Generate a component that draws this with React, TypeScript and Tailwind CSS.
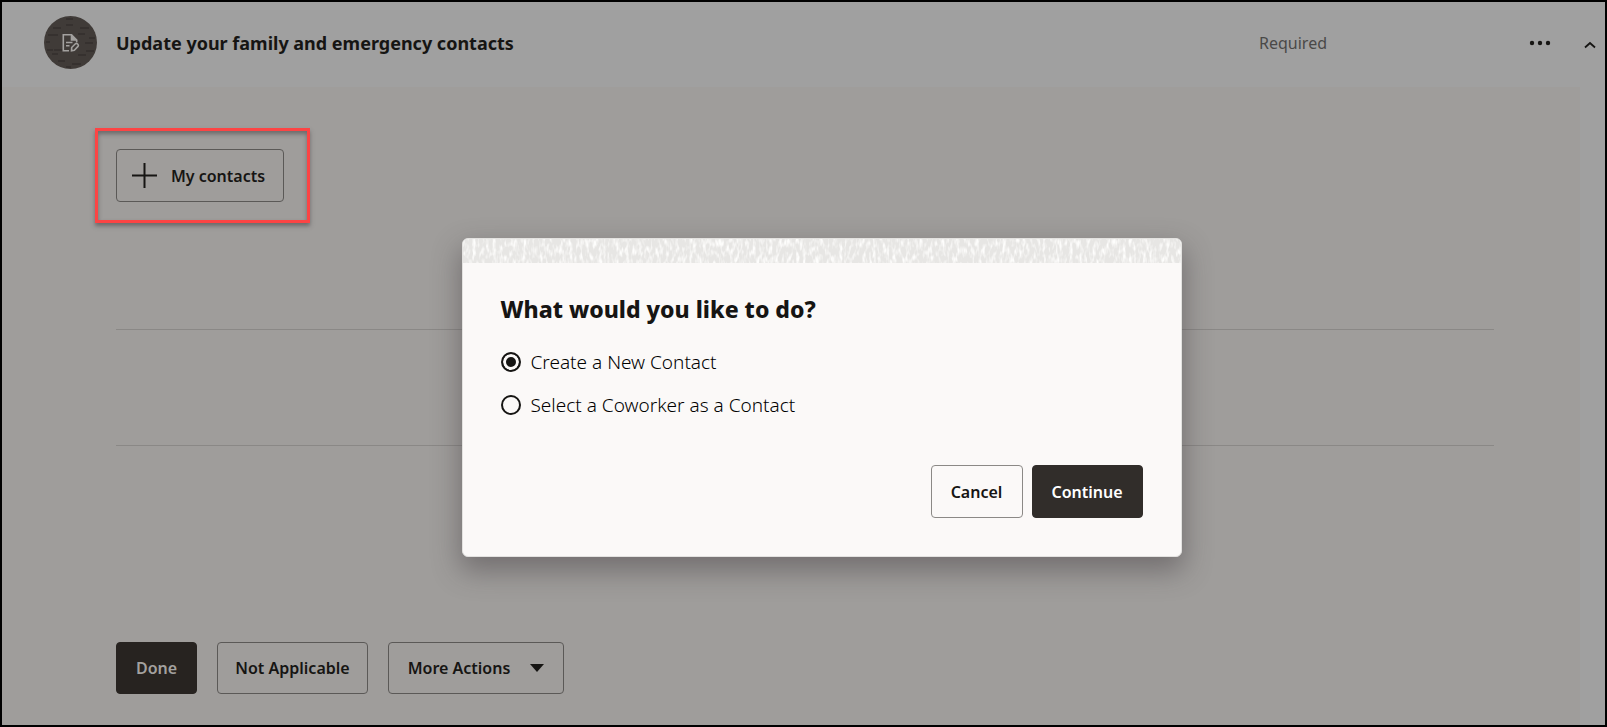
import { useState } from "react";
import type { ReactNode } from "react";
import clsx from "clsx";

const OPTIONS = [
  { value: "create", label: "Create a New Contact" },
  { value: "coworker", label: "Select a Coworker as a Contact" },
];

type ActionButtonProps = {
  children: ReactNode;
  className?: string;
};

const ActionButton = ({ children, className }: ActionButtonProps) => {
  return (
    <button
      type="button"
      className={clsx(
        "flex items-center justify-center rounded border text-base font-semibold whitespace-nowrap",
        className
      )}
    >
      {children}
    </button>
  );
};

const TaskIcon = () => {
  return (
    <svg viewBox="0 0 53 53" className="size-[53px]" aria-hidden="true">
      <circle cx="26.5" cy="26.5" r="26.5" fill="#403b38" />
      <path
        d="M22 3h7M9 12h8M22 9h7M36 12h9M4 19h10M34 18h7M45 22h6M2 26h4M10 34h9M41 27h8M3 34h6M42 35h8M8 38h6M34 39h8M14 45h7M28 48h9M22 51h5"
        stroke="#332f2c"
        strokeWidth="1.3"
      />
      <g fill="none" stroke="#a3a19f" strokeWidth="1.6">
        <path d="M25 34.700h-5.700V18.800h8.200l5.200 5.200v2.200" />
        <path d="M27.500 18.800V24h5.200" fill="#a3a19f" />
        <path d="M22 26.500h6.500M22 29.800h3.500" />
        <path d="M27.500 34.700l.2-3.200 3.700-3.700q1-.8 2 0l.6.700q.8 1 0 1.900l-3.700 3.900z" />
      </g>
    </svg>
  );
};

const TextureBand = () => {
  return (
    <svg className="block h-6 w-full" aria-hidden="true">
      <filter id="grain" x="0" y="0" width="100%" height="100%">
        <feTurbulence
          type="fractalNoise"
          baseFrequency="0.3 0.12"
          numOctaves="2"
          seed="4"
        />
        <feColorMatrix values="0 0 0 0 0.985  0 0 0 0 0.98  0 0 0 0 0.97  3 0 0 0 -1.3" />
      </filter>
      <rect width="100%" height="100%" fill="#e7e6e4" />
      <rect width="100%" height="100%" filter="url(#grain)" />
    </svg>
  );
};

const TaskHeader = () => {
  return (
    <header className="flex h-[85px] items-center pb-1 pl-[42px]">
      <TaskIcon />
      <h1 className="ml-[19px] text-lg font-bold">
        Update your family and emergency contacts
      </h1>
      <span className="mr-[202px] ml-auto text-base text-[#4a4948]">
        Required
      </span>
      <button type="button" aria-label="More options" className="mr-[33px]">
        <svg viewBox="0 0 22 6" className="h-1.5 w-[22px]" fill="#161513">
          <circle cx="3" cy="3" r="2.2" />
          <circle cx="11" cy="3" r="2.2" />
          <circle cx="19" cy="3" r="2.2" />
        </svg>
      </button>
      <button type="button" aria-label="Collapse" className="mt-1 mr-[9px]">
        <svg
          viewBox="0 0 12 8"
          className="h-2 w-3"
          fill="none"
          stroke="#161513"
          strokeWidth="1.8"
        >
          <path d="M1 6.500l5-4.500 5 4.500" />
        </svg>
      </button>
    </header>
  );
};

const ContactDialog = () => {
  const [choice, setChoice] = useState("create");

  return (
    <div className="absolute inset-0 flex items-start justify-center pt-[236px] pl-9">
      <div
        role="dialog"
        aria-labelledby="dialog-title"
        className="w-full max-w-[720px] overflow-hidden rounded-md border border-[#e3e2e0] bg-[#fbf9f8] shadow-[0_12px_28px_2px_rgba(66,60,64,0.47)]"
      >
        <TextureBand />
        <div className="px-[38px] pt-[30px] pb-[38px]">
          <h2
            id="dialog-title"
            className="text-[23px] leading-8 font-extrabold"
          >
            What would you like to do?
          </h2>
          <fieldset className="mt-[23px] flex flex-col gap-[15px]">
            {OPTIONS.map((option) => (
              <label
                key={option.value}
                className="flex items-center gap-2.5 text-[19px] leading-7 font-light text-black"
              >
                <input
                  type="radio"
                  name="contact-type"
                  value={option.value}
                  checked={choice === option.value}
                  onChange={() => setChoice(option.value)}
                  className="size-5 appearance-none rounded-full border-2 border-[#161513] checked:bg-[#161513] checked:shadow-[inset_0_0_0_3px_#fbf9f8]"
                />
                {option.label}
              </label>
            ))}
          </fieldset>
          <div className="mt-[46px] flex justify-end gap-[9px]">
            <ActionButton className="h-[53px] w-[92px] border-[#8b8986]">
              Cancel
            </ActionButton>
            <ActionButton className="h-[53px] w-[111px] border-[#312d2a] bg-[#312d2a] text-white">
              Continue
            </ActionButton>
          </div>
        </div>
      </div>
    </div>
  );
};

const App = () => {
  return (
    <div className="relative flex min-h-screen flex-col border-2 border-black bg-[#a0a0a0] font-['Noto_Sans',sans-serif] text-[#161513]">
      <TaskHeader />
      <main className="mr-[25px] flex flex-1 flex-col bg-[#9f9d9b] pt-[41px] pb-[31px]">
        <div className="ml-[93px] self-start border-[3px] border-[#fc4444] py-[18px] pr-[23px] pl-[18px] shadow-[0_3px_4px_rgba(60,55,60,0.5),inset_0_3px_4px_rgba(60,55,60,0.5)]">
          <ActionButton className="h-[53px] w-[168px] gap-[14px] border-[#5b5957] pr-[3px]">
            <svg
              viewBox="0 0 25 25"
              className="size-[25px]"
              stroke="#161513"
              strokeWidth="2"
              aria-hidden="true"
            >
              <path d="M12.500 0v25M0 12.500h25" />
            </svg>
            My contacts
          </ActionButton>
        </div>
        <div className="mr-[86px] ml-[114px]">
          <div className="h-[107px] border-b border-[#8a8886]" />
          <div className="h-[116px] border-b border-[#8a8886]" />
        </div>
        <footer className="mt-auto ml-[114px] flex gap-5">
          <ActionButton className="h-[52px] w-[81px] border-[#272320] bg-[#272320] text-[#a3a19f]">
            Done
          </ActionButton>
          <ActionButton className="h-[52px] w-[151px] border-[#5b5957]">
            Not Applicable
          </ActionButton>
          <ActionButton className="h-[52px] w-[176px] gap-5 border-[#5b5957]">
            More Actions
            <svg viewBox="0 0 14 8" className="h-2 w-3.5" aria-hidden="true">
              <path d="M0 0h14L7 8z" fill="#161513" />
            </svg>
          </ActionButton>
        </footer>
      </main>
      <ContactDialog />
    </div>
  );
};

export default App;
